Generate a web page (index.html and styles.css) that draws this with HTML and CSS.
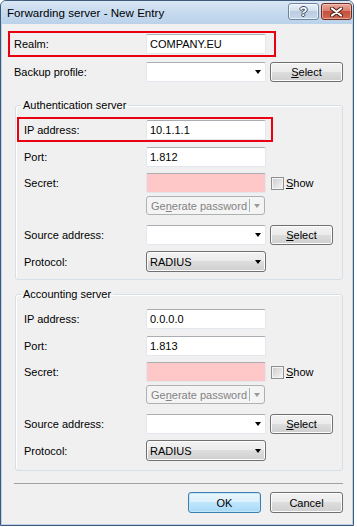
FILE: index.html
```html
<!DOCTYPE html>
<html lang="en">
<head>
    <meta charset="UTF-8">
    <meta name="viewport" content="width=device-width, initial-scale=1.0">
    <title>Forwarding server - New Entry</title>
    <link rel="stylesheet" href="styles.css">
</head>
<body>
    <div class="window">
        <!-- title bar -->
        <div class="titlebar">
            <span class="title">Forwarding server - New Entry</span>
            <div class="caption">
                <span class="cap-btn help">?</span>
                <span class="cap-btn close">
                    <svg width="13" height="10" viewBox="0 0 13 10">
                        <path d="M2 1.5 L11 8.5 M11 1.5 L2 8.5" stroke="#4a1d17" stroke-width="4" stroke-linecap="round"/>
                        <path d="M2 1.5 L11 8.5 M11 1.5 L2 8.5" stroke="#fff" stroke-width="2.2" stroke-linecap="round"/>
                    </svg>
                </span>
            </div>
        </div>

        <div class="client">
            <div class="row mark top">
                <span class="lbl">Realm:</span>
                <div class="edit">COMPANY.EU</div>
            </div>
            <div class="row plain top backup">
                <span class="lbl">Backup profile:</span>
                <div class="edit combo"><span class="arrow"></span></div>
                <button class="btn wide"><u>S</u>elect</button>
            </div>

            <!-- authentication server -->
            <fieldset class="group auth">
                <legend>Authentication server</legend>
                <div class="row mark">
                    <span class="lbl">IP address:</span>
                    <div class="edit">10.1.1.1</div>
                </div>
                <div class="row plain r-port">
                    <span class="lbl">Port:</span>
                    <div class="edit">1.812</div>
                </div>
                <div class="row plain r-secret">
                    <span class="lbl">Secret:</span>
                    <div class="edit secret"></div>
                    <span class="check"></span>
                    <span class="check-lbl"><u>S</u>how</span>
                </div>
                <div class="row plain r-gen">
                    <span class="lbl"></span>
                    <div class="split">
                        <span class="split-text">Ge<u>n</u>erate password</span>
                        <span class="split-drop"><span class="arrow grey"></span></span>
                    </div>
                </div>
                <div class="row plain r-source">
                    <span class="lbl">Source address:</span>
                    <div class="edit combo"><span class="arrow"></span></div>
                    <button class="btn"><u>S</u>elect</button>
                </div>
                <div class="row plain r-proto">
                    <span class="lbl">Protocol:</span>
                    <div class="dropdown">RADIUS<span class="arrow"></span></div>
                </div>
            </fieldset>

            <!-- accounting server -->
            <fieldset class="group acct">
                <legend>Accounting server</legend>
                <div class="row mark clear">
                    <span class="lbl">IP address:</span>
                    <div class="edit">0.0.0.0</div>
                </div>
                <div class="row plain r-port">
                    <span class="lbl">Port:</span>
                    <div class="edit">1.813</div>
                </div>
                <div class="row plain r-secret">
                    <span class="lbl">Secret:</span>
                    <div class="edit secret"></div>
                    <span class="check"></span>
                    <span class="check-lbl"><u>S</u>how</span>
                </div>
                <div class="row plain r-gen">
                    <span class="lbl"></span>
                    <div class="split">
                        <span class="split-text">Ge<u>n</u>erate password</span>
                        <span class="split-drop"><span class="arrow grey"></span></span>
                    </div>
                </div>
                <div class="row plain r-source">
                    <span class="lbl">Source address:</span>
                    <div class="edit combo"><span class="arrow"></span></div>
                    <button class="btn"><u>S</u>elect</button>
                </div>
                <div class="row plain r-proto">
                    <span class="lbl">Protocol:</span>
                    <div class="dropdown">RADIUS<span class="arrow"></span></div>
                </div>
            </fieldset>

            <div class="separator"></div>
            <div class="footer">
                <button class="btn default">OK</button>
                <button class="btn">Cancel</button>
            </div>
        </div>
    </div>
</body>
</html>
```

FILE: styles.css
```css
body {
    margin: 0;
    background-color: #fff;
    font-family: "Liberation Sans", Arial, sans-serif;
    font-size: 11px;
    color: #000;
}
.window {
    width: 354px;
    height: 526px;
    box-sizing: border-box;
    border: 1px solid #3f5a78;
    border-radius: 6px 6px 0 0;
    background-color: #b9d1ea;
    display: flex;
    flex-direction: column;
}
.titlebar {
    height: 23px;
    flex: none;
    display: flex;
    align-items: flex-start;
    border-radius: 5px 5px 0 0;
    background: linear-gradient(#dae7f5, #c8dbef 45%, #bad2ea);
}
.title {
    padding-left: 6px;
    line-height: 24px;
    font-size: 11.6px;
    color: #000;
}
.caption {
    margin-left: auto;
    margin-right: 1px;
    padding-top: 2px;
    display: flex;
    gap: 2px;
}
.cap-btn {
    width: 31px;
    height: 17px;
    box-sizing: border-box;
    border: 1px solid #6f86a2;
    border-radius: 3px;
    display: flex;
    align-items: center;
    justify-content: center;
}
.help {
    background: linear-gradient(#e9f0f8, #d3e0ee 45%, #bccde2 50%, #c5d6ea);
    box-shadow: inset 0 0 0 1px rgba(255, 255, 255, 0.6);
    color: #fff;
    font-weight: bold;
    font-size: 13px;
    line-height: 15px;
    text-shadow: 1px 0 #3a4c63, -1px 0 #3a4c63, 0 1px #3a4c63, 0 -1px #3a4c63;
}
.close {
    border-color: #6b2d24;
    background: linear-gradient(#e8a99b, #d7806f 45%, #c4503d 50%, #cf6a53);
    box-shadow: inset 0 0 0 1px rgba(255, 220, 210, 0.5);
}
.client {
    flex: 1;
    margin: 0 1px 1px;
    padding: 7px 9px 0 6px;
    background-color: #f0f0f0;
}

/* rows */
.row {
    display: flex;
    align-items: center;
    height: 20px;
}
.lbl {
    flex: none;
    width: 122px;
}
.top .lbl {
    width: 132px;
}
.mark {
    box-sizing: border-box;
    height: 25px;
    border: 2px solid #ea0010;
    width: 256px;
    margin-left: 1px;
    padding-left: 5px;
}
.mark.clear {
    border-color: transparent;
}
.mark.top {
    width: 268px;
    height: 26px;
    margin-left: 0;
    padding-left: 4px;
}
.plain {
    padding-left: 8px;
}
.plain.top {
    padding-left: 6px;
}
.backup { margin-top: 5px; }
.r-port { margin-top: 5px; }
.r-secret { margin-top: 6px; }
.r-gen { margin-top: 3px; height: 19px; }
.r-source { margin-top: 10px; }
.r-proto { margin-top: 6px; height: 21px; }

/* controls */
.edit {
    box-sizing: border-box;
    width: 120px;
    height: 20px;
    padding-left: 3px;
    display: flex;
    align-items: center;
    background-color: #fff;
    border: 1px solid #e2e7ee;
    border-top-color: #abadb3;
    border-radius: 2px;
}
.edit.secret {
    background-color: #ffc8c8;
}
.arrow {
    margin-left: auto;
    margin-right: 4px;
    width: 0;
    height: 0;
    border-left: 3.5px solid transparent;
    border-right: 3.5px solid transparent;
    border-top: 4px solid #000;
}
.arrow.grey {
    margin: 0 auto;
    border-top-color: #9a9a9a;
}
.dropdown {
    box-sizing: border-box;
    width: 120px;
    height: 21px;
    padding-left: 3px;
    display: flex;
    align-items: center;
    border: 1px solid #707070;
    border-radius: 3px;
    background: linear-gradient(#f2f2f2, #ebebeb 50%, #dddddd 50%, #cfcfcf);
    box-shadow: inset 0 0 0 1px #fcfcfc;
}
.btn {
    box-sizing: border-box;
    width: 63px;
    height: 20px;
    margin-left: 4px;
    padding: 0;
    font-family: inherit;
    font-size: 11px;
    color: #000;
    border: 1px solid #707070;
    border-radius: 3px;
    background: linear-gradient(#f2f2f2, #ebebeb 50%, #dddddd 50%, #cfcfcf);
    box-shadow: inset 0 0 0 1px #fcfcfc;
}
.btn.wide {
    width: 73px;
}
.btn.default {
    border-color: #3c7fb1;
    background: linear-gradient(#eaf6fd, #d9f0fc 50%, #bee6fd 50%, #a7d9f5);
    box-shadow: inset 0 0 0 1px #c4e5f6;
}
.check {
    flex: none;
    box-sizing: border-box;
    width: 13px;
    height: 13px;
    margin-left: 5px;
    border: 1px solid #8e8f8f;
    background: linear-gradient(135deg, #cbcbcb, #f6f6f6);
    box-shadow: inset 0 0 0 1px #f4f4f4;
}
.check-lbl {
    margin-left: 2px;
}
.split {
    box-sizing: border-box;
    width: 119px;
    height: 19px;
    display: flex;
    align-items: center;
    border: 1px solid #adb2b5;
    border-radius: 3px;
    background-color: #f4f4f4;
    color: #838383;
}
.split-text {
    padding-left: 4px;
}
.split-drop {
    margin-left: auto;
    width: 14px;
    height: 13px;
    display: flex;
    align-items: center;
    border-left: 1px solid #adb2b5;
}

/* group boxes */
.group {
    box-sizing: border-box;
    width: 328px;
    margin: 17px 0 0 7px;
    padding: 5px 0 7px 0;
    border: 1px solid #d5dfe5;
    border-radius: 3px;
    box-shadow: inset 1px 1px 0 #fff;
}
.group legend {
    margin-left: 5px;
    padding: 0 2px;
    line-height: 13px;
}
.acct {
    margin-top: 8px;
    padding-bottom: 9px;
}
.separator {
    margin: 12px 0 0 6px;
    border-top: 1px solid #a0a0a0;
}
.footer {
    margin-top: 8px;
    display: flex;
    justify-content: flex-end;
    gap: 9px;
}
.footer .btn {
    width: 73px;
    height: 21px;
    margin: 0;
}
```
